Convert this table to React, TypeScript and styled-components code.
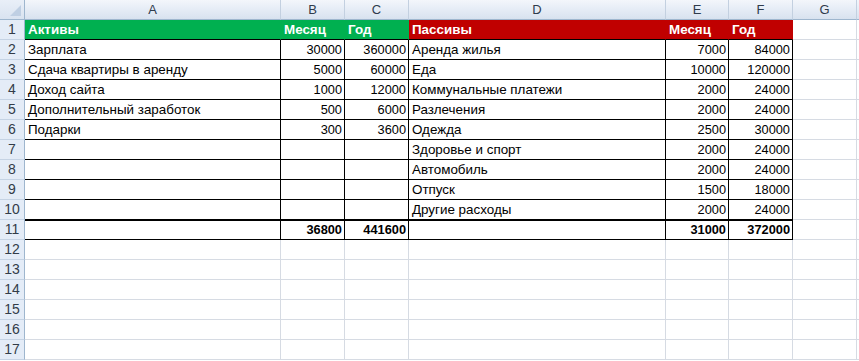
import React from "react";
import styled, { createGlobalStyle, css } from "styled-components";

const Global = createGlobalStyle`
  html, body { margin: 0; padding: 0; background: #ffffff; }
  body { font-family: "Liberation Sans", Arial, sans-serif; }
`;

const GRID = "#d6dbe3";
const HEAD_BORDER = "#9eb6ce";

const Sheet = styled.div`
  display: grid;
  grid-template-columns: 25px 256px 64px 64px 257px 63px 64px 64px 1fr;
  grid-auto-rows: 20px;
  width: 859px;
  overflow: hidden;
`;

const Corner = styled.div`
  position: relative;
  box-sizing: border-box;
  background: linear-gradient(#e9eff8, #d9e3f0);
  border-right: 1px solid ${HEAD_BORDER};
  border-bottom: 1px solid ${HEAD_BORDER};
  &::after {
    content: "";
    position: absolute;
    right: 3px;
    bottom: 3px;
    width: 0;
    height: 0;
    border-left: 11px solid transparent;
    border-bottom: 11px solid #bfcfe3;
  }
`;

const ColHead = styled.div`
  box-sizing: border-box;
  background: linear-gradient(#f3f6fb 0%, #e4ebf5 55%, #d8e2ef 100%);
  border-right: 1px solid #c3d0e0;
  border-bottom: 1px solid ${HEAD_BORDER};
  display: flex;
  align-items: center;
  justify-content: center;
  font-family: "Liberation Sans", Arial, sans-serif;
  font-size: 13px;
  color: #2f3b4c;
`;

const RowNum = styled.div`
  box-sizing: border-box;
  background: #e4ecf7;
  border-right: 1px solid ${HEAD_BORDER};
  border-bottom: 1px solid #c5d3e4;
  display: flex;
  align-items: flex-end;
  justify-content: center;
  padding-bottom: 1px;
  font-family: "Liberation Sans", Arial, sans-serif;
  font-size: 14px;
  color: #333c48;
  line-height: 17px;
`;

type CellProps = {
  $fill?: "green" | "red";
  $right?: boolean;
  $bold?: boolean;
  $table?: boolean;
  $thickTop?: boolean;
};

const fills = { green: "#00b050", red: "#c00000" };

const Cell = styled.div<CellProps>`
  box-sizing: border-box;
  display: flex;
  align-items: flex-end;
  justify-content: ${(p) => (p.$right ? "flex-end" : "flex-start")};
  padding: 0 2px 1px 3px;
  font-family: "Liberation Sans", Arial, sans-serif;
  font-size: 13.4px;
  line-height: 17px;
  white-space: nowrap;
  color: #000;
  font-weight: ${(p) => (p.$bold ? 700 : 400)};
  border-right: 1px solid ${GRID};
  border-bottom: 1px solid ${GRID};
  background: #fff;
  ${(p) =>
    p.$right &&
    css`
      font-size: 12.8px;
    `}
  ${(p) =>
    p.$table &&
    css`
      border-right-color: #000;
      border-bottom-color: #000;
    `}
  ${(p) =>
    p.$fill &&
    css`
      background: ${fills[p.$fill]};
      color: #fff;
      font-weight: 700;
      font-size: 13.4px;
      border-right-color: ${fills[p.$fill]};
      border-bottom-color: #000;
    `}
  ${(p) =>
    p.$thickTop &&
    css`
      box-shadow: inset 0 1px 0 #000;
    `}
`;

const cols = ["A", "B", "C", "D", "E", "F", "G", ""];

type Row = [string, string, string, string, string, string];

const rows: Row[] = [
  ["Зарплата", "30000", "360000", "Аренда жилья", "7000", "84000"],
  ["Сдача квартиры в аренду", "5000", "60000", "Еда", "10000", "120000"],
  ["Доход сайта", "1000", "12000", "Коммунальные платежи", "2000", "24000"],
  ["Дополнительный заработок", "500", "6000", "Разлечения", "2000", "24000"],
  ["Подарки", "300", "3600", "Одежда", "2500", "30000"],
  ["", "", "", "Здоровье и спорт", "2000", "24000"],
  ["", "", "", "Автомобиль", "2000", "24000"],
  ["", "", "", "Отпуск", "1500", "18000"],
  ["", "", "", "Другие расходы", "2000", "24000"],
];

const totals: Row = ["", "36800", "441600", "", "31000", "372000"];

const headers: Row = ["Активы", "Месяц", "Год", "Пассивы", "Месяц", "Год"];

export default function App() {
  const out: React.ReactNode[] = [];
  out.push(<Corner key="corner" />);
  cols.forEach((c, i) => out.push(<ColHead key={"h" + i}>{c}</ColHead>));

  out.push(<RowNum key="r1">1</RowNum>);
  headers.forEach((h, i) =>
    out.push(
      <Cell key={"1-" + i} $fill={i < 3 ? "green" : "red"}>
        {h}
      </Cell>
    )
  );
  out.push(<Cell key="1-g" />);
  out.push(<Cell key="1-x" />);

  rows.forEach((r, ri) => {
    const n = ri + 2;
    out.push(<RowNum key={"r" + n}>{n}</RowNum>);
    r.forEach((v, ci) =>
      out.push(
        <Cell key={n + "-" + ci} $table $right={ci % 3 !== 0}>
          {v}
        </Cell>
      )
    );
    out.push(<Cell key={n + "-g"} />);
    out.push(<Cell key={n + "-x"} />);
  });

  out.push(<RowNum key="r11">11</RowNum>);
  totals.forEach((v, ci) =>
    out.push(
      <Cell key={"11-" + ci} $table $bold $thickTop $right={ci % 3 !== 0}>
        {v}
      </Cell>
    )
  );
  out.push(<Cell key="11-g" />);
  out.push(<Cell key="11-x" />);

  for (let n = 12; n <= 17; n++) {
    out.push(<RowNum key={"r" + n}>{n}</RowNum>);
    for (let ci = 0; ci < 8; ci++) out.push(<Cell key={n + "-" + ci} />);
  }

  return (
    <>
      <Global />
      <Sheet>{out}</Sheet>
    </>
  );
}
